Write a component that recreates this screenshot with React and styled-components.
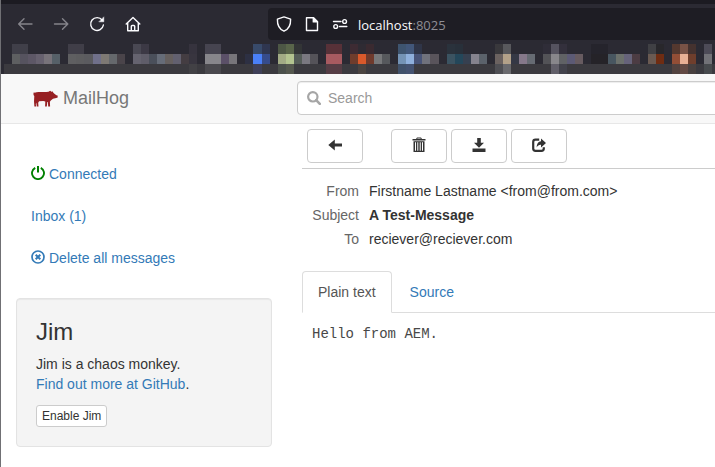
import React from "react";
import styled, { createGlobalStyle } from "styled-components";

const Global = createGlobalStyle`
  *, *::before, *::after { box-sizing: border-box; }
  html, body { margin: 0; padding: 0; overflow: hidden; }
  body { background: #fff; color: #333; font: 14px/20px "Liberation Sans", Arial, sans-serif; }
`;

const Window = styled.div`
  height: 467px;
  width: 715px;
  overflow: hidden;
  border-left: 1px solid #707074;
`;

/* ---------- browser chrome ---------- */

const Chrome = styled.header`
  height: 74px;
  background: #2b2a33;
  border-top: 4px solid #1c1b22;
`;
const Toolbar = styled.div`
  height: 40px;
  display: flex;
  align-items: center;
  padding-left: 16px;
`;
const NavIcons = styled.div`
  display: flex;
  gap: 20px;
  width: 251px;
  flex: none;
`;
const NavIcon = styled.svg`
  width: 16px;
  height: 16px;
  fill: none;
  stroke: ${(p) => (p.$dim ? "#85848b" : "#fbfbfe")};
  stroke-width: 1.4;
  stroke-linecap: round;
  stroke-linejoin: round;
`;
const AddressBar = styled.div`
  flex: none;
  width: 480px;
  height: 32px;
  display: flex;
  align-items: center;
  gap: 12px;
  padding-left: 8px;
  border-radius: 4px;
  background: #1e1d24;
`;
const Address = styled.span`
  margin-left: -2px;
  padding-top: 2px;
  font: 13px/20px "Open Sans", "Noto Sans", sans-serif;
  color: #fbfbfe;
`;
const Port = styled.span`
  color: #8f8e95;
`;

const Mosaic = styled.div`
  display: grid;
  grid-template-columns: repeat(89, 8.05px);
  grid-template-rows: repeat(3, 10px);
  grid-auto-flow: column;
  margin-left: 3px;
  width: 711px;
  overflow: hidden;
`;
const Tile = styled.div`
  background: ${(p) => p.$c};
`;

// column index -> colours from top to bottom; empty means the base colour
const TILES = {
  1: ["#403f49", "#5e5f61"], 2: ["#403f49", "#56535f"], 3: ["", "#5d5766"], 4: ["", "#67616f"],
  5: ["", "#78737a"], 6: ["", "#566068"],
  8: ["#403e48", "#5f5f61"], 9: ["#403e48", "#5d5d5f"], 10: ["", "#5b5b5f"], 11: ["", "#70708a"],
  12: ["", "#7e7974"], 13: ["", "#65686c"], 14: ["", "#4a444a"],
  16: ["#494853", "#65636f"], 17: ["#3c3945", "#5f5d69"], 18: ["", "#4a4f5a"], 19: ["", "#666c78"],
  20: ["", "#66605f"], 21: ["", "#62606f"], 22: ["", "#443d42"], 23: ["#36333e", "#38353f", "#424145"],
  25: ["#464450", "#87868b", "#4a494e"], 26: ["#464450", "#87868b", "#4a494e"], 27: ["", "#5b5068"],
  28: ["", "#77757a"], 30: ["", "#2d3043"],
  31: ["#384a6a", "#4a80f8", "#3f4058"], 32: ["#2f3650", "#364c8c"],
  34: ["#4d5745", "#a2ab85", "#4b504c"], 35: ["#59654a", "#b3c490", "#55584f"], 36: ["#333536", "#555d58"],
  37: ["", "#7a7880"], 38: ["", "#555359"],
  40: ["#573138", "#a75a60", "#553d45"], 41: ["#573138", "#a75a60", "#553d45"],
  43: ["#3d2b33", "#6f3c2c"], 44: ["#2f2b33", "#d9592b", "#4a4340"], 45: ["#3a2a30", "#6f3a2c"],
  46: ["", "#77787a"], 47: ["", "#56585c"],
  49: ["#3e546f", "#7493b5", "#40516a"], 50: ["#42577a", "#8fb0dc", "#445270"], 51: ["#2f3548", "#485478"],
  52: ["", "#70727c"], 53: ["", "#59545b"], 55: ["#2a323c", "#3b5361"], 56: ["#28303a", "#24475a"],
  57: ["", "#364050"], 58: ["", "#85838e"], 59: ["", "#5b626b"],
  61: ["#39383c", "#6b6260", "#4f4f54"], 62: ["#58585c", "#b3a189", "#6a6a6e"], 63: ["", "#353845"],
  64: ["", "#85788a"], 65: ["", "#666b73"],
  67: ["#2f2d38", "#535357"], 68: ["#55535f", "#88878b", "#615f69"], 69: ["#33303c", "#606265", "#42424b"],
  70: ["", "#5c5a75"], 71: ["", "#675b60"], 73: ["#25242c", "#252328"], 74: ["#25242c", "#252328"],
  75: ["", "#485660"], 76: ["", "#6c716c"], 77: ["", "#66637a"], 78: ["", "#4c3c43"],
  80: ["#404044", "#6a5a52"], 81: ["#28272b", "#6f2c12"],
  83: ["#54382f", "#934e36", "#52423f"], 84: ["#785246", "#e8b095", "#634a44"], 85: ["#45322f", "#6f3e2c", "#48403f"],
  87: ["#4d4b57", "#727277", "#474a4d"],
};
const BASE = ["#2b2a33", "#2b2a33", "#3b3a3f"];

/* ---------- page ---------- */

const Navbar = styled.nav`
  height: 50px;
  display: flex;
  background: #f8f8f8;
  border-bottom: 1px solid #e7e7e7;
`;
const Brand = styled.a`
  width: 296px;
  flex: none;
  display: flex;
  align-items: center;
  gap: 5px;
  padding: 0 0 2px 31px;
  font-size: 18px;
  color: #777;
`;
const Pig = styled.svg`
  width: 26px;
  height: 18px;
  margin-top: 3px;
  fill: #972023;
`;
const SearchBox = styled.div`
  flex: none;
  width: 480px;
  height: 34px;
  margin-top: 7px;
  padding-left: 9px;
  display: flex;
  align-items: center;
  gap: 7px;
  background: #fff;
  border: 1px solid #ccc;
  border-radius: 4px;
  box-shadow: inset 0 1px 1px rgba(0, 0, 0, 0.075);
  color: #999;
`;
const Glyph = styled.svg`
  display: block;
  flex: none;
  width: ${(p) => p.$w || 14}px;
  height: ${(p) => p.$w || 14}px;
  fill: ${(p) => p.$color || "currentColor"};
`;

const Body = styled.div`
  display: flex;
`;
const Sidebar = styled.aside`
  width: 301px;
  flex: none;
  padding: 29px 30px 0 15px;
`;
const SideLink = styled.a`
  display: flex;
  align-items: center;
  gap: 4px;
  height: 42px;
  padding-left: 15px;
  color: #337ab7;
  svg { margin-top: -2px; }
`;
const Well = styled.section`
  margin-top: 19px;
  height: 149px;
  padding: 20px 19px 19px;
  background: #f4f4f4;
  border: 1px solid #e3e3e3;
  border-radius: 4px;
  box-shadow: inset 0 1px 1px rgba(0, 0, 0, 0.05);
`;
const WellTitle = styled.h3`
  margin: 0 0 9px;
  font-size: 24px;
  line-height: 26px;
  font-weight: 400;
`;
const WellText = styled.p`
  margin: 0 0 11px;
`;
const Link = styled.a`
  color: #337ab7;
`;
const SmallButton = styled.button`
  display: block;
  height: 22px;
  padding: 0 5px;
  font: 12px/18px "Liberation Sans", Arial, sans-serif;
  color: #333;
  background: #fff;
  border: 1px solid #ccc;
  border-radius: 3px;
`;

const Main = styled.main`
  flex: none;
  width: 440px;
`;
const Actions = styled.div`
  display: flex;
  gap: 4px;
  height: 45px;
  padding: 5px 0 0 5px;
  border-bottom: 1px solid #ccc;
`;
const ActionButton = styled.button`
  width: 56px;
  height: 34px;
  margin-right: ${(p) => (p.$apart ? 24 : 0)}px;
  padding: 0 0 2px;
  display: flex;
  align-items: center;
  justify-content: center;
  color: #333;
  background: #fff;
  border: 1px solid #ccc;
  border-radius: 4px;
`;
const Headers = styled.dl`
  margin: 10px 0 20px;
  display: grid;
  grid-template-columns: 57px 1fr;
  grid-auto-rows: 24px;
  column-gap: 10px;
  line-height: 24px;
`;
const Name = styled.dt`
  text-align: right;
  color: #666;
`;
const Value = styled.dd`
  margin: 0;
  font-weight: ${(p) => (p.$bold ? 700 : 400)};
`;
const Tabs = styled.div`
  display: flex;
  gap: 2px;
  height: 42px;
  box-shadow: inset 0 -1px #ddd;
`;
const Tab = styled.a`
  padding: 10px 15px;
  border: 1px solid;
  border-color: ${(p) => (p.$active ? "#ddd #ddd #fff" : "transparent")};
  border-radius: 4px 4px 0 0;
  background: ${(p) => (p.$active ? "#fff" : "transparent")};
  color: ${(p) => (p.$active ? "#555" : "#337ab7")};
`;
const Message = styled.pre`
  margin: 11px 0 0 10px;
  color: #484848;
  font: 14px/20px "Liberation Mono", "Courier New", monospace;
`;

const Power = () => (
  <Glyph viewBox="0 0 14 14" $color="#008000">
    <path d="M6 0h2v6.500H6z" />
    <path d="M4.200 1.800A6 6 0 1 0 9.800 1.800" fill="none" stroke="#008000" strokeWidth="1.900" />
  </Glyph>
);
const RemoveCircle = () => (
  <Glyph viewBox="0 0 14 14">
    <circle cx="7" cy="7" r="6" fill="none" stroke="currentColor" strokeWidth="1.700" />
    <path d="M4.700 4.700l4.600 4.600M9.300 4.700L4.700 9.300" stroke="currentColor" strokeWidth="2" />
  </Glyph>
);
const SearchGlyph = () => (
  <Glyph viewBox="0 0 14 14" $color="#a6a6a6">
    <circle cx="5.800" cy="5.800" r="4.700" fill="none" stroke="#a6a6a6" strokeWidth="2.200" />
    <path d="M9.200 9.200l3.600 3.600" stroke="#a6a6a6" strokeWidth="2.600" strokeLinecap="round" />
  </Glyph>
);
const ArrowLeft = () => (
  <Glyph viewBox="0 0 14 14">
    <path d="M.3 7L6.800 1.500v3.900H14v3.200H6.800v3.900z" />
  </Glyph>
);
const Trash = () => (
  <Glyph viewBox="0 0 14 16" $w={16}>
    <path d="M.5 2h3.500L5 .4h4L10 2h3.500v1.400H.5zM5.500 1.400L5.200 2h3.600l-.3-.6z" fillRule="evenodd" />
    <path d="M1.500 4.200h11V15h-11zM3 5.200v8.500h1V5.200zM5.300 5.200v8.500h1V5.200zM7.700 5.200v8.500h1V5.200zM10 5.200v8.500h1V5.200z" fillRule="evenodd" />
  </Glyph>
);
const Save = () => (
  <Glyph viewBox="0 0 14 14">
    <path d="M5.200 0h3.600v4.800H12L7 9.800 2 4.800h3.200z" />
    <path d="M.5 10.500h13V14H.5z" />
  </Glyph>
);
const Share = () => (
  <Glyph viewBox="0 0 14 14">
    <path d="M7.200 1.600H3.500A2.300 2.300 0 0 0 1.200 3.900v6.600a2.300 2.300 0 0 0 2.300 2.300h6a2.300 2.300 0 0 0 2.300-2.300V9.200" fill="none" stroke="currentColor" strokeWidth="2.200" />
    <path d="M9 .6L14 5 9 9.400V6.700C7 6.600 5.700 7.400 4.600 9.400 4.700 5.800 6.300 3.500 9 3.200z" />
  </Glyph>
);

export default function App() {
  return (
    <Window>
      <Global />
      <Chrome>
        <Toolbar>
          <NavIcons>
            <NavIcon $dim viewBox="0 0 16 16"><path d="M15 8H1.800M7 2.700L1.700 8 7 13.300" /></NavIcon>
            <NavIcon $dim viewBox="0 0 16 16"><path d="M1.500 8h13.200M9.500 2.700L14.800 8 9.500 13.300" /></NavIcon>
            <NavIcon viewBox="0 0 16 16">
              <path d="M13.200 4.200A6.400 6.400 0 1 0 14.400 9" />
              <path d="M14.800 1.200v4.600h-4.600z" fill="#fbfbfe" strokeWidth=".5" />
            </NavIcon>
            <NavIcon viewBox="0 0 16 16">
              <path d="M1.200 8L8 1.400 14.800 8M2.700 7v7.800h10.600V7M6.300 14.500v-4.200q0-.8.8-.8h1.800q.8 0 .8.8v4.200" />
            </NavIcon>
          </NavIcons>
          <AddressBar>
            <NavIcon viewBox="0 0 16 16">
              <path d="M8 .9L14.600 3.200C14.800 8.500 13 13 8 15.200 3 13 1.200 8.500 1.400 3.200z" />
            </NavIcon>
            <NavIcon viewBox="0 0 16 16">
              <path d="M2.500 1.700h7L13.500 5.700v8.800h-11z" />
              <path d="M9.300 1.700v4.200h4.200z" fill="#fbfbfe" />
            </NavIcon>
            <NavIcon viewBox="0 0 16 16">
              <path d="M1.500 5.500H9M7.500 10.500h7.300" />
              <circle cx="12.600" cy="5.500" r="1.900" />
              <circle cx="3.700" cy="10.500" r="1.900" />
            </NavIcon>
            <Address>localhost<Port>:8025</Port></Address>
          </AddressBar>
        </Toolbar>
        <Mosaic>
          {Array.from({ length: 89 }, (_, k) =>
            BASE.map((base, r) => <Tile key={`${k}-${r}`} $c={(TILES[k] && TILES[k][r]) || base} />)
          )}
        </Mosaic>
      </Chrome>

      <Navbar>
        <Brand>
          <Pig viewBox="0 0 26 18">
            <path d="M1.500 3.600C1.300 2.800 2 2.300 2.700 2.800 3.800 2.200 5 2 6.500 2c4-.1 7 .2 10-.3l1.700-.9 1.200.9 1.500-.3.4 1.300 1.400 1.300 1.700 1.200 1.200.2.1 2.100-1.500.6-3.200.6-2.200 1.900-.9 1.200.2 4.600h-1.900l-.3-4.300h-.6l-.5 4.500h-1.700l.2-5-2-.6-4.200.3-.9 1.500.3 3.800H4.800l-.5-3.900-.5 1.200.3 2.700H2.400L2 11.300l.3-5.300-.8-.9z" />
          </Pig>
          MailHog
        </Brand>
        <SearchBox><SearchGlyph />Search</SearchBox>
      </Navbar>

      <Body>
        <Sidebar>
          <SideLink><Power />Connected</SideLink>
          <SideLink>Inbox (1)</SideLink>
          <SideLink><RemoveCircle />Delete all messages</SideLink>
          <Well>
            <WellTitle>Jim</WellTitle>
            <WellText>
              Jim is a chaos monkey.<br />
              <Link>Find out more at GitHub</Link>.
            </WellText>
            <SmallButton>Enable Jim</SmallButton>
          </Well>
        </Sidebar>
        <Main>
          <Actions>
            <ActionButton $apart><ArrowLeft /></ActionButton>
            <ActionButton><Trash /></ActionButton>
            <ActionButton><Save /></ActionButton>
            <ActionButton><Share /></ActionButton>
          </Actions>
          <Headers>
            <Name>From</Name><Value>Firstname Lastname &lt;from@from.com&gt;</Value>
            <Name>Subject</Name><Value $bold>A Test-Message</Value>
            <Name>To</Name><Value>reciever@reciever.com</Value>
          </Headers>
          <Tabs>
            <Tab $active>Plain text</Tab>
            <Tab>Source</Tab>
          </Tabs>
          <Message>Hello from AEM.</Message>
        </Main>
      </Body>
    </Window>
  );
}
